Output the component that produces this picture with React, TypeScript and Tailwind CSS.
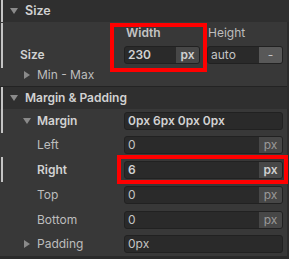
import React from "react";

const Tri = ({ open }: { open: boolean }) => (
  <svg width="8" height="8" viewBox="0 0 8 8" className="shrink-0">
    {open ? <polygon points="0,1 8,1 4,7" fill="#8a8a8a" /> : <polygon points="1,0 7,4 1,8" fill="#8a8a8a" />}
  </svg>
);

const Strip = () => <div className="absolute left-[1px] top-0 bottom-0 w-[2px] bg-[#c4c4c4]" />;

const Field = ({ value, unit, bold, bright, w }: { value: string; unit?: string; bold?: boolean; bright?: boolean; w?: string }) => (
  <div className={`flex h-[18px] ${w ?? "w-[159px]"} rounded-[3px] border border-[#212121] bg-[#2a2a2a] overflow-hidden`}>
    <div className={`flex-1 flex items-center pl-[3px] text-[12px] ${bold ? "font-semibold text-[#d2d2d2]" : "text-[#c4c4c4]"}`}>{value}</div>
    {unit && (
      <div className={`w-[23px] flex items-center justify-center bg-[#474747] text-[12px] ${bright ? "text-[#d0d0d0] font-semibold" : "text-[#9a9a9a]"}`}>{unit}</div>
    )}
  </div>
);

const Row = ({ label, h, bold, tri, strip, children }: { label: string; h: string; bold?: boolean; tri?: boolean; strip?: boolean; children: React.ReactNode }) => (
  <div className={`relative flex items-center ${h}`}>
    {strip && <Strip />}
    <div className="w-[124px] flex items-center pl-[23px] gap-[6px]">
      {tri ? <Tri open={label === "Margin"} /> : <div className="w-[8px]" />}
      <span className={`text-[12px] ${bold ? "font-semibold text-[#d2d2d2]" : "text-[#bdbdbd]"}`}>{label}</span>
    </div>
    {children}
  </div>
);

export default function App() {
  return (
    <div className="relative w-[289px] h-[259px] bg-[#383838] overflow-hidden" style={{ fontFamily: "Inter, 'Noto Sans', sans-serif" }}>
      {/* Size header */}
      <div className="relative flex items-center h-[22px] bg-[#2f2f2f] pl-[10px] gap-[7px]">
        <Strip />
        <Tri open />
        <span className="text-[12.5px] font-semibold text-[#d2d2d2]">Size</span>
      </div>
      {/* Size body */}
      <div className="relative h-[64px] flex flex-col">
        <div className="absolute left-[1px] top-[1px] h-[45px] w-[2px] bg-[#c4c4c4]" />
        <div className="h-[24px] flex items-end pb-[4px]">
          <div className="w-[126px]" />
          <span className="w-[82px] text-[12px] font-semibold text-[#c4c4c4]">Width</span>
          <span className="text-[12px] text-[#bdbdbd]">Height</span>
        </div>
        <div className="relative h-[18px] flex items-center">
          <div className="w-[124px] pl-[20px] text-[12px] font-semibold text-[#d2d2d2]">Size</div>
          <div className="flex gap-[7px]">
            <Field value="230" unit="px" bold bright w="w-[76px]" />
            <div className="flex h-[18px] w-[76px] rounded-[3px] border border-[#212121] bg-[#2a2a2a] overflow-hidden">
              <div className="flex-1 flex items-center pl-[3px] text-[12px] text-[#c4c4c4]">auto</div>
              <div className="w-[23px] flex items-center justify-center bg-[#585858] text-[12px] text-[#c4c4c4]">-</div>
            </div>
          </div>
        </div>
        <div className="h-[22px] flex items-center pl-[23px] gap-[6px]">
          <Tri open={false} />
          <span className="text-[12px] text-[#bdbdbd]">Min - Max</span>
        </div>
      </div>
      {/* Margin & Padding header */}
      <div className="relative flex items-center h-[23px] bg-[#2f2f2f] border-t border-[#232323] pl-[10px] gap-[7px]">
        <Strip />
        <Tri open />
        <span className="text-[12px] font-semibold text-[#d2d2d2]">Margin &amp; Padding</span>
      </div>
      <Row label="Margin" h="h-[24px]" bold tri strip>
        <Field value="0px 6px 0px 0px" bold />
      </Row>
      <Row label="Left" h="h-[24px]">
        <Field value="0" unit="px" />
      </Row>
      <Row label="Right" h="h-[25px]" bold strip>
        <Field value="6" unit="px" bold bright />
      </Row>
      <Row label="Top" h="h-[25px]">
        <Field value="0" unit="px" />
      </Row>
      <Row label="Bottom" h="h-[25px]">
        <Field value="0" unit="px" />
      </Row>
      <Row label="Padding" h="h-[24px]" tri>
        <Field value="0px" />
      </Row>
      <div className="h-[4px] bg-[#2a2a2a]" />
      {/* right edge */}
      <div className="absolute top-[22px] right-0 w-[2px] h-[237px] bg-[#2c2c2c]" />
      {/* Highlight boxes */}
      <div className="absolute left-[110px] top-[23px] w-[97px] h-[49px] border-[4px] border-[#ff0000]" />
      <div className="absolute left-[117px] top-[155px] w-[171px] h-[29px] border-[4px] border-[#ff0000]" />
    </div>
  );
}
